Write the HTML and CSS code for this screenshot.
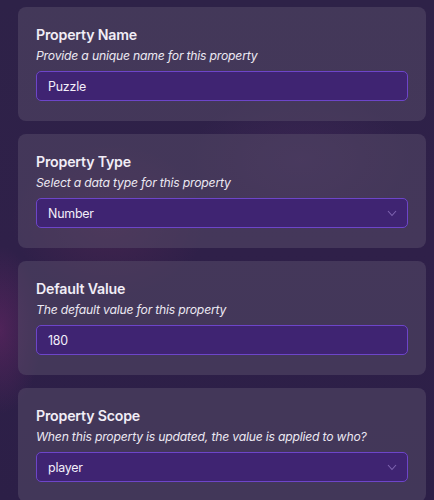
FILE: index.html
```html
<!DOCTYPE html>
<html lang="en">
<head>
<meta charset="utf-8">
<title>Property settings</title>
<link rel="stylesheet" href="styles.css">
</head>
<body>
<main class="page">
  <section class="card">
    <h2 class="card-title">Property Name</h2>
    <p class="card-desc">Provide a unique name for this property</p>
    <div class="field">Puzzle</div>
  </section>
  <section class="card">
    <h2 class="card-title">Property Type</h2>
    <p class="card-desc">Select a data type for this property</p>
    <div class="field field-select">
      <span>Number</span>
      <svg class="chev" width="10" height="7" viewBox="0 0 10 7"><path d="M1 1 L5 5.5 L9 1" fill="none" stroke="currentColor" stroke-width="1.1"/></svg>
    </div>
  </section>
  <section class="card">
    <h2 class="card-title">Default Value</h2>
    <p class="card-desc">The default value for this property</p>
    <div class="field">180</div>
  </section>
  <section class="card">
    <h2 class="card-title">Property Scope</h2>
    <p class="card-desc">When this property is updated, the value is applied to who?</p>
    <div class="field field-select">
      <span>player</span>
      <svg class="chev" width="10" height="7" viewBox="0 0 10 7"><path d="M1 1 L5 5.5 L9 1" fill="none" stroke="currentColor" stroke-width="1.1"/></svg>
    </div>
  </section>
</main>
</body>
</html>
```

FILE: styles.css
```css
html, body {
  margin: 0;
  padding: 0;
  height: 100%;
}
body {
  background:
    radial-gradient(ellipse 60px 120px at 0px 330px, rgba(120, 40, 110, 0.45), transparent 70%),
    radial-gradient(ellipse 140px 110px at 110px 220px, rgba(110, 45, 90, 0.3), transparent 70%),
    radial-gradient(ellipse 160px 100px at 300px 160px, rgba(90, 50, 110, 0.25), transparent 70%),
    linear-gradient(180deg, #2e2248 0%, #2f2049 50%, #2c1f47 100%);
  font-family: Inter, "Noto Sans", "Liberation Sans", sans-serif;
  color: #f2eef7;
  overflow: hidden;
}
.page {
  display: flex;
  flex-direction: column;
  gap: 13px;
  padding: 7px 8px 0 18px;
}
.card {
  background: rgba(86, 74, 104, 0.55);
  border-radius: 8px;
  padding: 18px 18px 19px 18px;
  height: 114px;
  box-sizing: border-box;
}
.card-title {
  margin: 0 0 2px 0;
  font-size: 14.2px;
  line-height: 20px;
  font-weight: 600;
  letter-spacing: -0.2px;
  color: #f1edf6;
}
.card-desc {
  margin: 0 0 6px 0;
  font-size: 12.2px;
  line-height: 18px;
  font-style: italic;
  letter-spacing: -0.2px;
  color: #ece8f2;
}
.field {
  box-sizing: border-box;
  height: 30px;
  border: 1px solid #6d45c9;
  border-radius: 5px;
  background: #3f2472;
  padding: 0 10px 0 11px;
  display: flex;
  align-items: center;
  justify-content: space-between;
  font-size: 12.4px;
  letter-spacing: -0.2px;
  color: #f3effa;
}
.chev {
  color: #7e64b0;
}
```
